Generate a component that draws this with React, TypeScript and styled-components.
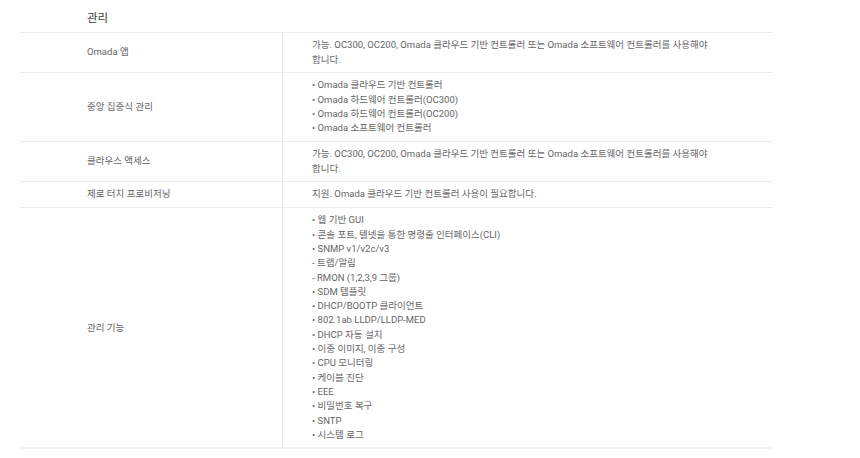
import styled, { createGlobalStyle } from 'styled-components';

const GlobalStyle = createGlobalStyle`
    html, body {
        margin: 0;
        padding: 0;
        background: #ffffff;
    }
    body {
        font-family: Roboto, "Noto Sans CJK KR", sans-serif;
    }
`;

const Page = styled.div`
    width: 860px;
    height: 458px;
    padding: 10px 87px 0 20px;
    box-sizing: border-box;
`;

const Heading = styled.h3`
    margin: 0 0 0 67px;
    height: 22px;
    font-size: 11.5px;
    font-weight: 400;
    line-height: 16px;
    color: #3a3a3a;
`;

const Table = styled.div`
    width: 753px;
    border-top: 1px solid #ebebeb;
    border-bottom: 2px solid #f2f2f2;
`;

const Row = styled.div`
    display: grid;
    grid-template-columns: 263px 1fr;
    border-bottom: 1px solid #ebebeb;

    &:last-child {
        border-bottom: none;
    }
`;

const Label = styled.div`
    display: flex;
    align-items: center;
    padding: 0 0 0 67px;
    border-right: 1px solid #ebebeb;
    font-size: 9.5px;
    line-height: 14.3px;
    color: #666;
`;

const Value = styled.div`
    padding: 5.3px 0 5.3px 29px;
    max-width: 410px;
    font-size: 9.5px;
    line-height: 14.3px;
    color: #666;
    word-break: keep-all;
`;

const Line = styled.div``;

type Spec = { label: string; lines: string[] };

const specs: Spec[] = [
    {
        label: 'Omada 앱',
        lines: [
            '가능. OC300, OC200, Omada 클라우드 기반 컨트롤러 또는 Omada 소프트웨어 컨트롤러를 사용해야 합니다.',
        ],
    },
    {
        label: '중앙 집중식 관리',
        lines: [
            '• Omada 클라우드 기반 컨트롤러',
            '• Omada 하드웨어 컨트롤러(OC300)',
            '• Omada 하드웨어 컨트롤러(OC200)',
            '• Omada 소프트웨어 컨트롤러',
        ],
    },
    {
        label: '클라우스 액세스',
        lines: [
            '가능. OC300, OC200, Omada 클라우드 기반 컨트롤러 또는 Omada 소프트웨어 컨트롤러를 사용해야 합니다.',
        ],
    },
    {
        label: '제로 터치 프로비저닝',
        lines: ['지원. Omada 클라우드 기반 컨트롤러 사용이 필요합니다.'],
    },
    {
        label: '관리 기능',
        lines: [
            '• 웹 기반 GUI',
            '• 콘솔 포트, 텔넷을 통한 명령줄 인터페이스(CLI)',
            '• SNMP v1/v2c/v3',
            '- 트랩/알림',
            '- RMON (1,2,3,9 그룹)',
            '• SDM 템플릿',
            '• DHCP/BOOTP 클라이언트',
            '• 802.1ab LLDP/LLDP-MED',
            '• DHCP 자동 설치',
            '• 이중 이미지, 이중 구성',
            '• CPU 모니터링',
            '• 케이블 진단',
            '• EEE',
            '• 비밀번호 복구',
            '• SNTP',
            '• 시스템 로그',
        ],
    },
];

export default function App() {
    return (
        <>
            <GlobalStyle />
            <Page>
                <Heading>관리</Heading>
                <Table>
                    {specs.map((spec) => (
                        <Row key={spec.label}>
                            <Label>{spec.label}</Label>
                            <Value>
                                {spec.lines.map((line, i) => (
                                    <Line key={i}>{line}</Line>
                                ))}
                            </Value>
                        </Row>
                    ))}
                </Table>
            </Page>
        </>
    );
}
